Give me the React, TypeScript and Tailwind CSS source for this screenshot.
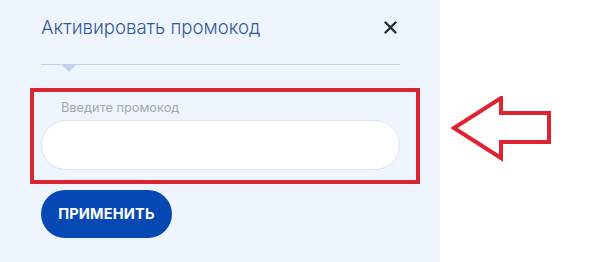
export default function App() {
  return (
    <div className="flex h-[262px] w-[614px] bg-white" style={{ fontFamily: 'Inter, "Noto Sans", sans-serif' }}>
      {/* Панель промокода */}
      <div className="flex h-full w-[440px] flex-col bg-[#eff5fe]">
        <div className="ml-[41px] mt-[15px] flex w-[359px] items-center justify-between">
          <span className="text-[18.6px] font-light leading-[24px] text-[#34599a]">Активировать промокод</span>
          <svg width="13" height="13" viewBox="0 0 13 13" className="mr-[3px]">
            <path d="M1.5 1.5 L11.5 11.5 M11.5 1.5 L1.5 11.5" stroke="#262a3a" strokeWidth="2.4" strokeLinecap="round" />
          </svg>
        </div>

        <div className="relative ml-[41px] mt-[25px] h-px w-[359px] bg-[#c3d2e8]">
          <div className="absolute left-[21px] top-px h-0 w-0 border-x-[7px] border-t-[7px] border-x-transparent border-t-[#c3d3ec]" />
        </div>

        <div className="ml-[30px] mt-[23px] w-[390px] border-4 border-[#da2430] pl-[7px] pt-[8px]">
          <div className="pl-[20px] text-[12.8px] leading-[16px] text-[#a3a7ae]">Введите промокод</div>
          <div className="mt-[4px] h-[50px] w-[359px] rounded-full border border-[#dfe3ea] bg-white" />
          <div className="h-[10px]" />
        </div>

        <button className="ml-[41px] mt-[6px] h-[48px] w-[131px] rounded-full bg-[#0648b4] text-[14.5px] font-bold tracking-[0.2px] text-white">
          ПРИМЕНИТЬ
        </button>
      </div>

      {/* Стрелка */}
      <div className="flex flex-1 items-start pl-[11px] pt-[96px]">
        <svg width="104" height="66" viewBox="0 0 104 66">
          <path d="M3 32 L50 2 L50 17 L98 17 L98 46 L50 46 L50 62 Z" fill="none" stroke="#dd2430" strokeWidth="4" strokeLinejoin="miter" />
        </svg>
      </div>
    </div>
  );
}
